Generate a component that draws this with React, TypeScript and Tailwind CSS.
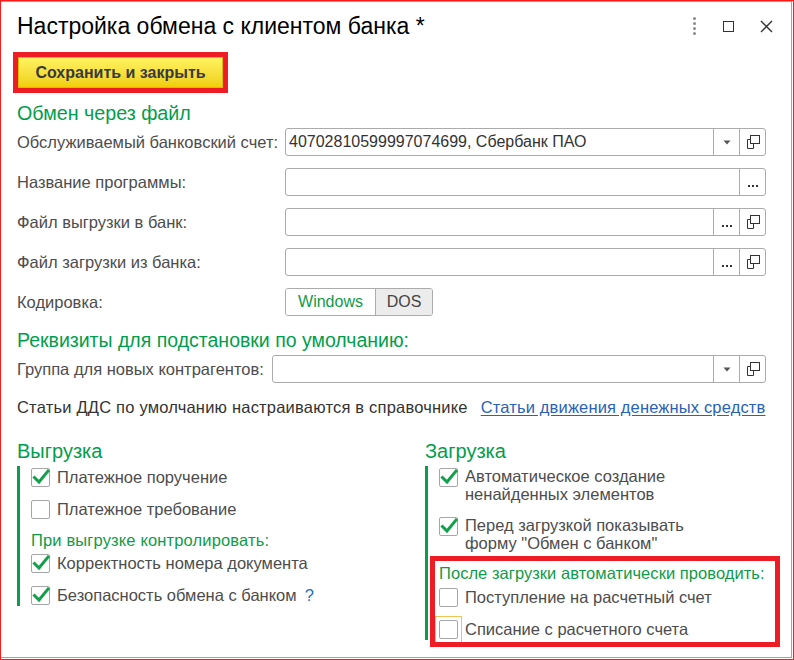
import React from "react";

const FONT = { fontFamily: '"Liberation Sans", Arial, sans-serif' };

function Arrow() {
  return (
    <svg width="8" height="5" viewBox="0 0 8 5">
      <path d="M0.5 0.5 H7.5 L4 4.5 Z" fill="#555" />
    </svg>
  );
}

function CopyIcon() {
  return (
    <svg width="16" height="16" viewBox="0 0 16 16" fill="none" stroke="#333" strokeWidth="1">
      <rect x="5.5" y="1.5" width="9" height="8" />
      <path d="M5.5 5.5 H2.5 V14.5 H8.5 V9.5" />
    </svg>
  );
}

function Dots() {
  return (
    <div className="flex gap-[2px] mt-[8px]">
      <span className="w-[2px] h-[2px] bg-[#333]" />
      <span className="w-[2px] h-[2px] bg-[#333]" />
      <span className="w-[2px] h-[2px] bg-[#333]" />
    </div>
  );
}

function Field({ value, buttons }: { value?: string; buttons: ("arrow" | "copy" | "dots")[] }) {
  return (
    <div className="flex h-[28px] flex-1 border border-[#ababab] rounded-[3px] bg-white">
      <div className="flex-1 flex items-center pl-[3px] text-[16px] text-[#333] whitespace-nowrap">{value}</div>
      {buttons.map((b, i) => (
        <div key={i} className="w-[26px] border-l border-[#ababab] flex items-center justify-center">
          {b === "arrow" ? <Arrow /> : b === "copy" ? <CopyIcon /> : <Dots />}
        </div>
      ))}
    </div>
  );
}

function Checkbox({ checked, focus }: { checked?: boolean; focus?: boolean }) {
  const box = (
    <div className="relative w-[19px] h-[19px] shrink-0 border border-[#a6a6a6] rounded-[2px] bg-white">
      {checked && (
        <svg className="absolute -left-[1px] -top-[2px]" width="21" height="21" viewBox="0 0 21 21" fill="none">
          <path d="M3.5 10.5 L8 15 L17 4" stroke="#12a04c" strokeWidth="3" strokeLinecap="square" />
        </svg>
      )}
    </div>
  );
  if (focus) {
    return (
      <div className="relative shrink-0">
        {box}
        <span className="absolute -left-[4px] -top-[4px] w-[27px] h-[27px] border border-[#f3c44f]" />
      </div>
    );
  }
  return box;
}

function CheckRow({ checked, label, focus, extra }: { checked?: boolean; label: string; focus?: boolean; extra?: React.ReactNode }) {
  return (
    <div className="flex items-center h-[22px]">
      <Checkbox checked={checked} focus={focus} />
      <span className="ml-[7px] text-[16.5px] text-[#4d4d4d] whitespace-nowrap">{label}</span>
      {extra}
    </div>
  );
}

function CheckRow2({ checked, lines }: { checked?: boolean; lines: string[] }) {
  return (
    <div className="flex items-start">
      <div className="mt-[1px]">
        <Checkbox checked={checked} />
      </div>
      <div className="ml-[7px] text-[16.5px] leading-[18px] text-[#4d4d4d]">
        {lines.map((l) => (
          <div key={l} className="whitespace-nowrap">{l}</div>
        ))}
      </div>
    </div>
  );
}

export default function App() {
  return (
    <div style={FONT} className="w-[794px] h-[660px] border border-[#ff1a1a] bg-white overflow-hidden">
      <div className="h-[657px] mr-px border-t border-r border-b border-[#a4a4a4] flex flex-col">
        {/* Title */}
        <div className="h-[48px] flex items-center pl-[16px] pr-[18px] shrink-0">
          <div className="text-[23px] text-black whitespace-nowrap">Настройка обмена с клиентом банка *</div>
          <div className="flex-1" />
          <div className="flex items-center">
            <div className="flex flex-col gap-[2px] items-center w-[6px]">
              <span className="w-[3px] h-[3px] rounded-full bg-[#8a8a8a]" />
              <span className="w-[3px] h-[3px] rounded-full bg-[#8a8a8a]" />
              <span className="w-[3px] h-[3px] rounded-full bg-[#8a8a8a]" />
              <span className="w-[3px] h-[3px] rounded-full bg-[#8a8a8a]" />
            </div>
            <div className="ml-[26px] w-[11px] h-[11px] border-[1.5px] border-[#333]" />
            <svg className="ml-[26px]" width="13" height="13" viewBox="0 0 13 13" stroke="#333" strokeWidth="1.4">
              <path d="M1 1 L12 12 M12 1 L1 12" />
            </svg>
          </div>
        </div>

        {/* Save button */}
        <div className="mt-[2px] ml-[12px] w-[215px] h-[41px] border-[5px] border-[#ee1c25] shrink-0">
          <div className="w-full h-full bg-gradient-to-b from-[#fff35e] to-[#f0cf00] border border-[#d9bb00] flex items-center justify-center">
            <span className="text-[16px] font-bold text-[#3a3a3a] whitespace-nowrap">Сохранить и закрыть</span>
          </div>
        </div>

        <div className="pl-[16px] pr-[25px]">
          <div className="mt-[8px] h-[24px] leading-[24px] text-[19.7px] text-[#009e4c]">Обмен через файл</div>

          <div className="mt-[3px] flex flex-col gap-[12px] text-[16.5px]">
            <div className="flex items-center">
              <div className="w-[268px] text-[#4d4d4d] whitespace-nowrap">Обслуживаемый банковский счет:</div>
              <Field value="40702810599997074699, Сбербанк ПАО" buttons={["arrow", "copy"]} />
            </div>
            <div className="flex items-center">
              <div className="w-[268px] text-[#4d4d4d]">Название программы:</div>
              <Field buttons={["dots"]} />
            </div>
            <div className="flex items-center">
              <div className="w-[268px] text-[#4d4d4d]">Файл выгрузки в банк:</div>
              <Field buttons={["dots", "copy"]} />
            </div>
            <div className="flex items-center">
              <div className="w-[268px] text-[#4d4d4d]">Файл загрузки из банка:</div>
              <Field buttons={["dots", "copy"]} />
            </div>
            <div className="flex items-center">
              <div className="w-[268px] text-[#4d4d4d]">Кодировка:</div>
              <div className="flex h-[28px] border border-[#ababab] rounded-[3px] overflow-hidden">
                <div className="w-[89px] flex items-center justify-center bg-white text-[16px] text-[#0f9b48]">Windows</div>
                <div className="w-[57px] flex items-center justify-center bg-[#ececec] border-l border-[#ababab] text-[16px] text-[#444]">DOS</div>
              </div>
            </div>
          </div>

          <div className="mt-[12px] h-[24px] leading-[24px] text-[19.5px] text-[#009e4c] whitespace-nowrap">Реквизиты для подстановки по умолчанию:</div>

          <div className="mt-[3px] flex items-center">
            <div className="w-[255px] text-[16.5px] text-[#4d4d4d] whitespace-nowrap">Группа для новых контрагентов:</div>
            <Field buttons={["arrow", "copy"]} />
          </div>

          <div className="mt-[14px] h-[20px] flex items-center text-[16.5px] tracking-[0.2px] whitespace-nowrap">
            <span className="text-[#333]">Статьи ДДС по умолчанию настраиваются в справочнике</span>
            <span className="ml-[13px] tracking-[0.15px] text-[#2a62b6] underline underline-offset-[2px]">Статьи движения денежных средств</span>
          </div>

          {/* Columns */}
          <div className="mt-[22px] flex">
            <div className="w-[408px] shrink-0">
              <div className="h-[24px] leading-[24px] text-[20px] text-[#009e4c]">Выгрузка</div>
              <div className="mt-[3px] border-l-[3px] border-[#0c9c4a] pl-[11px]">
                <CheckRow checked label="Платежное поручение" />
                <div className="mt-[10px]">
                  <CheckRow label="Платежное требование" />
                </div>
                <div className="mt-[10px] h-[20px] leading-[20px] text-[16.5px] tracking-[0.15px] text-[#0f9b48] whitespace-nowrap">При выгрузке контролировать:</div>
                <div className="mt-[2px]">
                  <CheckRow checked label="Корректность номера документа" />
                </div>
                <div className="mt-[10px]">
                  <CheckRow
                    checked
                    label="Безопасность обмена с банком"
                    extra={<span className="ml-[8px] text-[16.5px] text-[#1c72bd]">?</span>}
                  />
                </div>
              </div>
            </div>

            <div className="flex-1 min-w-0">
              <div className="h-[24px] leading-[24px] text-[20px] text-[#009e4c]">Загрузка</div>
              <div className="mt-[3px] border-l-[3px] border-[#0c9c4a] pl-[11px] pt-[1px]">
                <CheckRow2 checked lines={["Автоматическое создание", "ненайденных элементов"]} />
                <div className="mt-[13px]">
                  <CheckRow2 checked lines={["Перед загрузкой показывать", 'форму "Обмен с банком"']} />
                </div>
                <div className="relative mt-[11px]">
                  <div className="h-[20px] leading-[20px] text-[16.5px] tracking-[0.05px] text-[#0f9b48] whitespace-nowrap">После загрузки автоматически проводить:</div>
                  <div className="mt-[3px]">
                    <CheckRow label="Поступление на расчетный счет" />
                  </div>
                  <div className="mt-[10px]">
                    <CheckRow label="Списание с расчетного счета" focus />
                  </div>
                  <span className="absolute -left-[9px] -top-[7px] -bottom-[7px] w-[350px] border-[5px] border-[#ee1c25] pointer-events-none" />
                </div>
              </div>
            </div>
          </div>
        </div>
      </div>
    </div>
  );
}
